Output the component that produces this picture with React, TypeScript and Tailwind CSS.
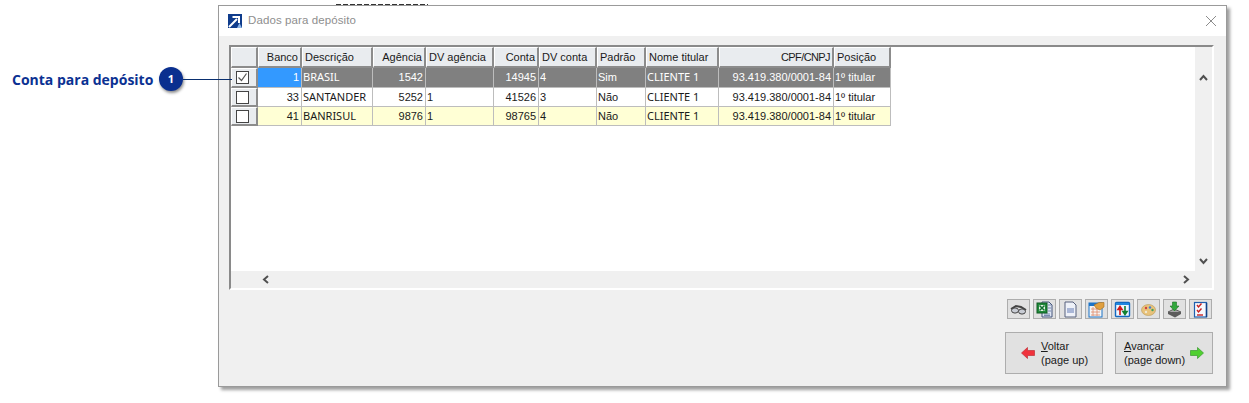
const cols = "grid-cols-[27px_44px_71px_53px_68px_45px_58px_49px_73px_115px_57px]";

type Row = { b: string; d: string; ag: string; dva: string; c: string; dvc: string; p: string; cpf: string };
const rows: Row[] = [
  { b: "1", d: "BRASIL", ag: "1542", dva: "", c: "14945", dvc: "4", p: "Sim", cpf: "93.419.380/0001-84" },
  { b: "33", d: "SANTANDER", ag: "5252", dva: "1", c: "41526", dvc: "3", p: "Não", cpf: "93.419.380/0001-84" },
  { b: "41", d: "BANRISUL", ag: "9876", dva: "1", c: "98765", dvc: "4", p: "Não", cpf: "93.419.380/0001-84" },
];

function Head({ children, right, tight }: { children?: React.ReactNode; right?: boolean; tight?: boolean }) {
  return (
    <div
      className={`h-[21px] bg-[#e9ecef] border-t border-l border-t-white border-l-white border-r-2 border-b-2 border-r-[#8c8c8c] border-b-[#8c8c8c] leading-[19px] px-[2px] whitespace-nowrap overflow-hidden ${right ? "text-right" : ""} ${tight ? "tracking-[-0.6px]" : ""}`}
    >
      {children}
    </div>
  );
}

function Cell({ children, right, tone, blue, caps, first }: { children?: React.ReactNode; right?: boolean; tone: string; blue?: boolean; caps?: boolean; first?: boolean }) {
  return (
    <div
      className={`${first ? "h-[20px]" : "h-[19px]"} border-r border-b border-[#bdbdbd] leading-[18px] ${right ? "pr-[2px]" : "pl-[1px]"} whitespace-nowrap overflow-hidden ${right ? "text-right" : ""} ${caps ? "font-['Noto_Sans',sans-serif]" : ""} ${blue ? "bg-[#3399ff] text-white" : tone}`}
    >
      {children}
    </div>
  );
}

function ToolBtn({ children }: { children: React.ReactNode }) {
  return (
    <div className="w-[23px] h-[20px] bg-[#e1e1e1] border border-[#adadad] flex items-center justify-center">
      <svg width="17" height="17" viewBox="0 0 17 17">{children}</svg>
    </div>
  );
}

function Arrow({ dir }: { dir: "up" | "down" | "left" | "right" }) {
  const rot = { up: 0, right: 90, down: 180, left: 270 }[dir];
  return (
    <svg width="9" height="9" viewBox="0 0 9 9" style={{ transform: `rotate(${rot}deg)` }}>
      <path d="M1 7 L4.5 3 L8 7" fill="none" stroke="#505050" strokeWidth="2" />
    </svg>
  );
}

export default function App() {
  return (
    <div className="relative w-[1249px] h-[403px] bg-white overflow-hidden font-['Liberation_Sans',sans-serif] text-[11px] text-[#1a1a1a]">
      {/* Page content showing just above the window */}
      <div className="absolute left-[336px] top-[4px] w-[92px] h-[1px] bg-[repeating-linear-gradient(90deg,#333_0_5px,transparent_5px_7px)]" />

      {/* Callout */}
      <div className="absolute left-[12px] top-[67px] flex items-center h-[24px]">
        <span className="w-[147px] font-['Open_Sans',sans-serif] font-bold text-[14px] text-[#0b3192] whitespace-nowrap">Conta para depósito</span>
        <span className="w-[24px] h-[24px] rounded-full bg-[#0a2f8f] text-white font-['Open_Sans',sans-serif] font-bold text-[11px] flex items-center justify-center shadow-[1px_2px_3px_rgba(0,0,0,0.45)]">1</span>
      </div>
      <div className="absolute left-[183px] top-[79px] w-[49px] h-[1px] bg-[#0a2f6f] z-10" />

      {/* Window */}
      <div className="ml-[218px] mt-[5px] w-[1009px] h-[382px] border border-[#9a9a9a] bg-[#f0f0f0] flex flex-col shadow-[3px_3px_3px_rgba(0,0,0,0.38)]">
        {/* Title */}
        <div className="h-[30px] bg-white flex items-center pl-[9px] pr-[8px] shrink-0">
          <svg width="14" height="14" viewBox="0 0 14 14">
            <rect width="14" height="14" fill="#0f3c8c" />
            <path d="M1 13 L9 5 M4.5 3 H11 V9" stroke="#fff" strokeWidth="2" fill="none" />
            <path d="M9 14 L11.5 9 L14 14 Z" fill="#8fb6e6" />
          </svg>
          <span className="ml-[6px] text-[11.5px] tracking-[0.1px] text-[#8e8e8e]">Dados para depósito</span>
          <svg className="ml-auto mr-[1px]" width="12" height="12" viewBox="0 0 12 12">
            <path d="M1 1 L11 11 M11 1 L1 11" stroke="#8c8c8c" strokeWidth="1" fill="none" />
          </svg>
        </div>

        {/* Body */}
        <div className="flex-1 flex flex-col pt-[9px] pl-[10px] pr-[12px]">
          {/* Grid box */}
          <div className="h-[245px] w-[985px] border-t-2 border-l-2 border-[#8a8a8a] border-r-2 border-r-white border-b-2 border-b-white bg-white flex flex-col shrink-0">
            <div className="flex-1 flex min-h-0">
              <div className="flex-1 min-w-0">
                <div className={`grid ${cols} w-[660px]`}>
                  <Head />
                  <Head right>Banco</Head>
                  <Head>Descrição</Head>
                  <Head right>Agência</Head>
                  <Head>DV agência</Head>
                  <Head right>Conta</Head>
                  <Head>DV conta</Head>
                  <Head>Padrão</Head>
                  <Head>Nome titular</Head>
                  <Head right tight>CPF/CNPJ</Head>
                  <Head>Posição</Head>
                  {rows.map((r, i) => {
                    const tone = i === 0 ? "bg-[#808080] text-white" : i === 1 ? "bg-white" : "bg-[#ffffd5]";
                    const first = i === 0;
                    return (
                      <div key={r.b} className="contents">
                        <div className={`${first ? "h-[20px]" : "h-[19px]"} bg-[#e9ecef] border-t border-l border-t-white border-l-white border-r-2 border-b-2 border-r-[#8c8c8c] border-b-[#8c8c8c] flex items-center justify-center pr-[3px]`}>
                          <svg width="13" height="13" viewBox="0 0 13 13">
                            <rect x="0.5" y="0.5" width="12" height="12" fill="#fff" stroke="#444" />
                            {first && <path d="M2.5 6.5 L5.5 9.5 L10.5 2.5" fill="none" stroke="#555" strokeWidth="1.2" />}
                          </svg>
                        </div>
                        <Cell first={first} right tone={tone} blue={first}>{r.b}</Cell>
                        <Cell first={first} caps tone={tone}>{r.d}</Cell>
                        <Cell first={first} right tone={tone}>{r.ag}</Cell>
                        <Cell first={first} tone={tone}>{r.dva}</Cell>
                        <Cell first={first} right tone={tone}>{r.c}</Cell>
                        <Cell first={first} tone={tone}>{r.dvc}</Cell>
                        <Cell first={first} tone={tone}>{r.p}</Cell>
                        <Cell first={first} caps tone={tone}>CLIENTE 1</Cell>
                        <Cell first={first} right tone={tone}>{r.cpf}</Cell>
                        <Cell first={first} tone={tone}>1º titular</Cell>
                      </div>
                    );
                  })}
                </div>
              </div>
              {/* Vertical scrollbar */}
              <div className="w-[17px] bg-[#f0f0f0] flex flex-col items-center justify-between pt-[26px] pb-[5px] shrink-0">
                <Arrow dir="up" />
                <Arrow dir="down" />
              </div>
            </div>
            {/* Horizontal scrollbar */}
            <div className="h-[17px] bg-[#f0f0f0] flex items-center justify-between pl-[30px] pr-[21px] shrink-0">
              <Arrow dir="left" />
              <Arrow dir="right" />
            </div>
          </div>

          {/* Toolbar */}
          <div className="flex justify-end gap-[3px] mt-[9px] w-[983px]">
            <ToolBtn>
              <path d="M1 8 L6 5 L11 6 L16 9" stroke="#444" strokeWidth="2" fill="none" />
              <ellipse cx="5" cy="9.5" rx="3.5" ry="2.6" fill="#c8ccd4" stroke="#444" />
              <ellipse cx="12" cy="10.5" rx="3.5" ry="2.6" fill="#c8ccd4" stroke="#444" />
            </ToolBtn>
            <ToolBtn>
              <path d="M6 1 H13 L16 4 V16 H6 Z" fill="#dfe6f3" stroke="#44557a" />
              <path d="M8 13 H14 M8 14.5 H14 M12 4 H15 M12 7 H15 M12 10 H15" stroke="#7a8bb0" />
              <rect x="1" y="2" width="10" height="10" fill="#1f8a3a" stroke="#0f5a20" />
              <rect x="3" y="4" width="6" height="6" fill="#e6f4e6" />
              <path d="M3.5 4.5 L8.5 9.5 M8.5 4.5 L3.5 9.5" stroke="#127030" strokeWidth="1.5" />
            </ToolBtn>
            <ToolBtn>
              <path d="M3 1 H11 L14 4 V16 H3 Z" fill="#eef1f8" stroke="#56607c" />
              <rect x="5" y="7" width="7" height="5" fill="#a9b6d6" />
            </ToolBtn>
            <ToolBtn>
              <rect x="1" y="2" width="13" height="14" fill="#f4f4f4" stroke="#1c74c8" />
              <rect x="1" y="2" width="13" height="3" fill="#1c74c8" />
              <path d="M3 8 H12 M3 11 H12 M3 14 H12 M5 6 V15 M9 6 V15" stroke="#e08a6a" strokeWidth="0.8" />
              <path d="M6 4 L11 1.5 H16 V6 L12 9 L8 7 Z" fill="#e0a040" stroke="#a46c1c" strokeWidth="0.6" />
            </ToolBtn>
            <ToolBtn>
              <rect x="1.5" y="1.5" width="14" height="14" rx="1" fill="#eef6ff" stroke="#1268c0" strokeWidth="1.4" />
              <rect x="2" y="2" width="13" height="2" fill="#1f88e0" />
              <path d="M6 14 V7 M4 8.5 L6 5.5 L8 8.5 Z" stroke="#d01818" strokeWidth="1.6" fill="#d01818" />
              <path d="M11 5 V12 M9 10.5 L11 13.5 L13 10.5 Z" stroke="#128030" strokeWidth="1.6" fill="#128030" />
            </ToolBtn>
            <ToolBtn>
              <ellipse cx="8.5" cy="9" rx="7" ry="5.5" fill="#e8c27a" stroke="#b89858" strokeWidth="0.6" />
              <circle cx="6" cy="7" r="1.2" fill="#d04040" />
              <circle cx="10" cy="6.5" r="1.2" fill="#4080d0" />
              <circle cx="12.5" cy="9" r="1.2" fill="#40a060" />
              <circle cx="6" cy="11" r="1.2" fill="#f0e8d0" />
            </ToolBtn>
            <ToolBtn>
              <path d="M2 11 L8 8 L15 11 L9 15 Z" fill="#a8a8a8" stroke="#444" strokeWidth="0.8" />
              <path d="M2 11 V13 L9 16.5 L15 13 V11" fill="#5c5c5c" />
              <path d="M6.5 1 H10.5 V5 H13 L8.5 10 L4 5 H6.5 Z" fill="#32a83c" stroke="#1c7024" strokeWidth="0.6" />
            </ToolBtn>
            <ToolBtn>
              <rect x="2.5" y="1.5" width="12" height="14.5" fill="#f6f8fd" stroke="#1f5fae" strokeWidth="1.2" />
              <path d="M14.5 2 V16" stroke="#0f4088" strokeWidth="1.5" />
              <path d="M5 4 L6.5 6 L9.5 2.5 M5 9 L6.5 11 L9.5 7.5" stroke="#c82020" strokeWidth="1.4" fill="none" />
              <path d="M5 14 H11" stroke="#c82020" strokeWidth="1.4" />
            </ToolBtn>
          </div>

          {/* Nav */}
          <div className="flex justify-end gap-[12px] mt-[13px] w-[984px]">
            <div className="w-[98px] h-[42px] bg-[#e1e1e1] border border-[#adadad] flex items-center pl-[15px] gap-[6px]">
              <svg width="14" height="14" viewBox="0 0 14 14">
                <path d="M0.5 7 L6.5 1.5 V4.5 H13.5 V9.5 H6.5 V12.5 Z" fill="#f0323c" stroke="#c03038" strokeWidth="0.7" />
              </svg>
              <span className="leading-[14px]"><span className="underline">V</span>oltar<br />(page up)</span>
            </div>
            <div className="w-[98px] h-[42px] bg-[#e1e1e1] border border-[#adadad] flex items-center pl-[8px] gap-[5px]">
              <span className="leading-[14px] whitespace-nowrap"><span className="underline">A</span>vançar<br />(page down)</span>
              <svg width="14" height="14" viewBox="0 0 14 14">
                <path d="M13.5 7 L7.5 1.5 V4.5 H0.5 V9.5 H7.5 V12.5 Z" fill="#50d030" stroke="#3a9a30" strokeWidth="0.7" />
              </svg>
            </div>
          </div>
        </div>
      </div>
    </div>
  );
}
